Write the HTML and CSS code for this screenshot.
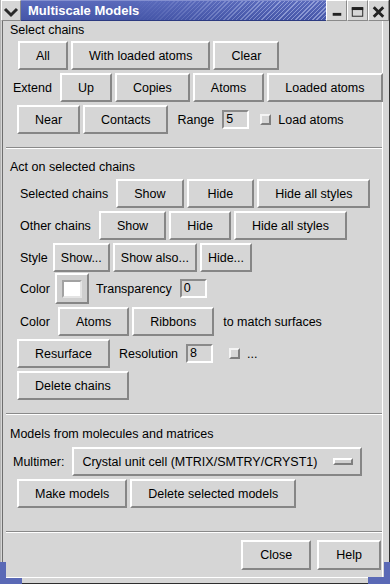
FILE: index.html
```html
<!DOCTYPE html>
<html lang="en">
<head>
    <meta charset="UTF-8">
    <meta name="viewport" content="width=device-width, initial-scale=1.0">
    <title>Multiscale Models</title>
    <link rel="stylesheet" href="styles.css">
</head>
<body>
    <div class="window">
        <div class="titlebar">
            <div class="tb-menu">
                <svg width="18" height="20" viewBox="0 0 18 20"><path d="M3 8 L9 14 L15 8" fill="none" stroke="#2a2a2a" stroke-width="3"/></svg>
            </div>
            <div class="tb-title">Multiscale Models</div>
            <div class="tb-btn">
                <svg width="20" height="20" viewBox="0 0 20 20"><rect x="6" y="12" width="9" height="3" fill="#222"/></svg>
            </div>
            <div class="tb-btn">
                <svg width="20" height="20" viewBox="0 0 20 20"><rect x="4.5" y="6.5" width="11" height="9" fill="none" stroke="#222"/><rect x="4" y="6" width="12" height="3" fill="#222"/></svg>
            </div>
            <div class="tb-btn">
                <svg width="20" height="20" viewBox="0 0 20 20"><path d="M5 6 L15 16 M15 6 L5 16" stroke="#222" stroke-width="3"/></svg>
            </div>
        </div>

        <div class="frame">
            <div class="client">
                <!-- Select chains -->
                <div class="group-title">Select chains</div>
                <div class="rows">
                    <div class="row indent-15">
                        <button class="btn">All</button>
                        <button class="btn">With loaded atoms</button>
                        <button class="btn">Clear</button>
                    </div>
                    <div class="row indent-10">
                        <span class="label">Extend</span>
                        <button class="btn">Up</button>
                        <button class="btn">Copies</button>
                        <button class="btn">Atoms</button>
                        <button class="btn">Loaded atoms</button>
                    </div>
                    <div class="row indent-14">
                        <button class="btn">Near</button>
                        <button class="btn">Contacts</button>
                        <span class="label after">Range</span>
                        <span class="entry">5</span>
                        <span class="check"></span>
                        <span class="check-label">Load atoms</span>
                    </div>
                </div>

                <div class="separator"></div>

                <!-- Act on selected chains -->
                <div class="group-title">Act on selected chains</div>
                <div class="rows rows-act">
                    <div class="row indent-17">
                        <span class="label">Selected chains</span>
                        <button class="btn">Show</button>
                        <button class="btn btn-wide">Hide</button>
                        <button class="btn">Hide all styles</button>
                    </div>
                    <div class="row indent-17">
                        <span class="label">Other chains</span>
                        <button class="btn">Show</button>
                        <button class="btn">Hide</button>
                        <button class="btn">Hide all styles</button>
                    </div>
                    <div class="row indent-17">
                        <span class="label short">Style</span>
                        <button class="btn btn-menu">Show...</button>
                        <button class="btn btn-menu">Show also...</button>
                        <button class="btn btn-menu">Hide...</button>
                    </div>
                    <div class="row row-color indent-17">
                        <span class="label short">Color</span>
                        <span class="swatch"><span class="swatch-fill"></span></span>
                        <span class="label">Transparency</span>
                        <span class="entry">0</span>
                    </div>
                    <div class="row indent-17">
                        <span class="label">Color</span>
                        <button class="btn">Atoms</button>
                        <button class="btn">Ribbons</button>
                        <span class="label after">to match surfaces</span>
                    </div>
                    <div class="row indent-14">
                        <button class="btn">Resurface</button>
                        <span class="label after">Resolution</span>
                        <span class="entry">8</span>
                        <span class="check wide"></span>
                        <span class="check-label">...</span>
                    </div>
                    <div class="row indent-14">
                        <button class="btn">Delete chains</button>
                    </div>
                </div>

                <div class="separator"></div>

                <!-- Models from molecules and matrices -->
                <div class="group-title title-models">Models from molecules and matrices</div>
                <div class="rows rows-models">
                    <div class="row indent-10">
                        <span class="label">Multimer:</span>
                        <button class="btn option-menu">
                            <span>Crystal unit cell (MTRIX/SMTRY/CRYST1)</span>
                            <span class="menu-indicator"></span>
                        </button>
                    </div>
                    <div class="row indent-14">
                        <button class="btn">Make models</button>
                        <button class="btn">Delete selected models</button>
                    </div>
                </div>

                <div class="separator sep-bottom"></div>

                <div class="row dialog-buttons">
                    <button class="btn dialog-btn">Close</button>
                    <button class="btn dialog-btn">Help</button>
                </div>
            </div>
        </div>

        <div class="corner corner-left"></div>
        <div class="corner corner-right"></div>
    </div>
</body>
</html>
```

FILE: styles.css
```css
* {
    margin: 0;
    padding: 0;
    box-sizing: border-box;
}
body {
    background: #d6d6d6;
}
.window {
    position: relative;
    width: 390px;
    height: 584px;
    display: flex;
    flex-direction: column;
    background: #d6d6d6;
    border-left: 1px solid #b4b4b4;
    border-right: 1px solid #2e2e2e;
    border-bottom: 1px solid #2e2e2e;
    font-family: "Liberation Sans", Arial, sans-serif;
    font-size: 12.5px;
    color: #000;
}

/* title bar */
.titlebar {
    height: 21px;
    display: flex;
    flex-shrink: 0;
}
.tb-menu,
.tb-btn {
    width: 20px;
    background: #d6d6d6;
    border-top: 1px solid #fff;
    border-left: 1px solid #fff;
    border-right: 1px solid #8a8a8a;
    border-bottom: 1px solid #8a8a8a;
    display: flex;
    align-items: center;
    justify-content: center;
}
.tb-btn {
    width: 21px;
}
.tb-title {
    position: relative;
    flex: 1;
    padding-left: 7px;
    line-height: 19px;
    font-size: 13px;
    font-weight: bold;
    color: #fff;
    background: linear-gradient(#5a6abb, #4556a8);
    border-top: 1px solid #8490d0;
    border-bottom: 1px solid #2c3a80;
    overflow: hidden;
}
.tb-title::after {
    content: "";
    position: absolute;
    top: 0;
    left: 0;
    right: 0;
    bottom: 0;
    background: repeating-linear-gradient(135deg, rgba(190, 200, 240, 0.55) 0 1px, transparent 1px 3px);
    -webkit-mask-image: linear-gradient(to right, transparent 35%, #000 85%);
    mask-image: linear-gradient(to right, transparent 35%, #000 85%);
}

/* frame and client area */
.frame {
    flex: 1;
    display: flex;
    padding: 0 6px 5px 1px;
}
.client {
    flex: 1;
    min-width: 0;
    display: flex;
    flex-direction: column;
    border-left: 1px solid #6e6e6e;
    border-right: 1px solid #fff;
    border-bottom: 1px solid #fff;
}
.group-title {
    margin-top: 1px;
    padding-left: 7px;
    line-height: 16px;
}
.rows {
    display: flex;
    flex-direction: column;
    gap: 3px;
    margin-top: 3px;
}
.rows-act {
    margin-top: 4px;
}
.rows-models {
    margin-top: 5px;
}
.separator + .group-title {
    margin-top: 10px;
}
.separator + .title-models {
    margin-top: 11px;
}
.row {
    display: flex;
    align-items: center;
    gap: 3px;
    height: 29px;
    white-space: nowrap;
}
.row-color {
    height: 31px;
    margin-top: -2px;
}
.indent-10 { padding-left: 10px; }
.indent-14 { padding-left: 14px; }
.indent-15 { padding-left: 15px; }
.indent-17 { padding-left: 17px; }

.label {
    margin-right: 5px;
}
.label.short {
    margin-right: 2px;
}
.label.after {
    margin-left: 6px;
}
.swatch + .label {
    margin-left: 4px;
}
.separator {
    height: 2px;
    margin: 13px 0 0 3px;
    border-top: 1px solid #8a8a8a;
    border-bottom: 1px solid #fff;
}
.sep-bottom {
    margin-top: 23px;
}

/* widgets */
.btn {
    flex-shrink: 0;
    height: 29px;
    padding: 0 16px;
    font: inherit;
    color: #000;
    background: #d6d6d6;
    border: 2px solid;
    border-color: #fff #868686 #868686 #fff;
    cursor: pointer;
}
.btn-wide {
    padding: 0 19px;
}
.btn-menu {
    padding: 0 6px;
}
.entry {
    width: 27px;
    height: 19px;
    padding-left: 2px;
    line-height: 15px;
    border: 2px solid;
    border-color: #8a8a8a #fff #fff #8a8a8a;
}
.check {
    width: 11px;
    height: 11px;
    margin-left: 8px;
    background: #d6d6d6;
    border: 2px solid;
    border-color: #f4f4f4 #7e7e7e #7e7e7e #f4f4f4;
}
.check.wide {
    margin-left: 13px;
}
.check-label {
    margin-left: 4px;
}
.swatch {
    width: 34px;
    height: 31px;
    padding: 5px 0 0 5px;
    background: #cfcfcf;
    border: 2px solid;
    border-color: #fff #868686 #868686 #fff;
}
.swatch-fill {
    display: block;
    width: 20px;
    height: 18px;
    background: #fff;
    border: 2px solid;
    border-color: #a2a2a2 #e4e4e4 #e4e4e4 #a2a2a2;
}
.option-menu {
    width: 290px;
    display: flex;
    align-items: center;
    justify-content: space-between;
    padding: 0 7px 0 8px;
}
.menu-indicator {
    width: 20px;
    height: 7px;
    background: #d0d0d0;
    border: 2px solid;
    border-color: #fff #7e7e7e #7e7e7e #fff;
}
.dialog-buttons {
    justify-content: flex-end;
    margin-top: 7px;
    padding-right: 1px;
    gap: 6px;
}
.dialog-btn {
    height: 30px;
    padding: 0 17px;
}

/* resize corners */
.corner {
    position: absolute;
    bottom: -1px;
    width: 22px;
    height: 22px;
}
.corner-left {
    left: -1px;
    border-left: 6px solid #5a69b6;
    border-bottom: 6px solid #5a69b6;
}
.corner-right {
    right: -1px;
    border-right: 6px solid #5a69b6;
    border-bottom: 7px solid #5a69b6;
}
```
